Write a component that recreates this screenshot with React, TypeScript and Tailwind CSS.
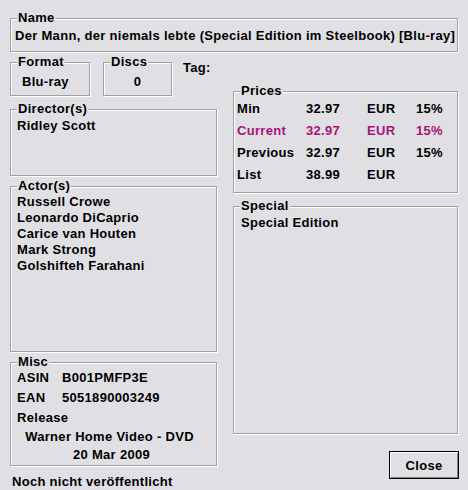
import React from "react";

const etched =
  "border border-[#a0a0a0] shadow-[inset_1px_1px_0_#ffffff,1px_1px_0_#ffffff]";

function Group({
  label,
  className,
  children,
}: {
  label: string;
  className: string;
  children?: React.ReactNode;
}) {
  return (
    <div className={`relative ${etched} ${className}`}>
      <span className="absolute left-[6px] top-[-9px] px-[1px] leading-[15px] bg-[#e0e0e4]">
        {label}
      </span>
      {children}
    </div>
  );
}

const prices = [
  { l: "Min", v: "32.97", c: "EUR", p: "15%", hl: false },
  { l: "Current", v: "32.97", c: "EUR", p: "15%", hl: true },
  { l: "Previous", v: "32.97", c: "EUR", p: "15%", hl: false },
  { l: "List", v: "38.99", c: "EUR", p: "", hl: false },
];

export default function App() {
  return (
    <div
      className="w-[468px] h-[490px] bg-[#e0e0e4] text-black font-bold text-[13px] tracking-[0.3px] pt-[18px] pl-[10px] overflow-hidden"
      style={{ fontFamily: '"Liberation Sans", Arial, sans-serif' }}
    >
      <Group label="Name" className="w-[448px] h-[34px] flex items-center pl-[4px] pt-[1px]">
        <span className="whitespace-nowrap overflow-hidden leading-[15px]">
          Der Mann, der niemals lebte (Special Edition im Steelbook) [Blu-ray]
        </span>
      </Group>

      <div className="flex gap-[16px] mt-[10px]">
        {/* left column */}
        <div className="w-[207px] flex flex-col">
          <div className="flex items-start">
            <Group label="Format" className="w-[80px] h-[34px] flex items-center pl-[11px] pt-[4px]">
              <span className="leading-[15px]">Blu-ray</span>
            </Group>
            <Group label="Discs" className="ml-[13px] w-[69px] h-[34px] flex items-center justify-center pt-[4px]">
              <span className="leading-[15px]">0</span>
            </Group>
            <span className="ml-[11px] mt-[-2px] leading-[15px]">Tag:</span>
          </div>

          <Group label="Director(s)" className="mt-[13px] h-[67px] pl-[6px] pt-[8px]">
            <div className="leading-[16px]">Ridley Scott</div>
          </Group>

          <Group label="Actor(s)" className="mt-[10px] h-[166px] pl-[6px] pt-[7px]">
            {["Russell Crowe", "Leonardo DiCaprio", "Carice van Houten", "Mark Strong", "Golshifteh Farahani"].map(
              (a) => (
                <div key={a} className="leading-[16px]">
                  {a}
                </div>
              )
            )}
          </Group>

          <Group label="Misc" className="mt-[10px] h-[104px] pl-[6px] pt-[4px]">
            <div className="flex h-[21px] items-center">
              <span className="w-[45px]">ASIN</span>
              <span>B001PMFP3E</span>
            </div>
            <div className="flex h-[20px] items-center">
              <span className="w-[45px]">EAN</span>
              <span>5051890003249</span>
            </div>
            <div className="flex h-[19px] items-center">Release</div>
            <div className="flex h-[19px] items-center justify-center pr-[14px]">Warner Home Video - DVD</div>
            <div className="flex h-[18px] items-center justify-center pr-[10px]">20 Mar 2009</div>
          </Group>

          <div className="mt-[8px] ml-[2px] leading-[15px]">Noch nicht veröffentlicht</div>
        </div>

        {/* right column */}
        <div className="w-[225px] flex flex-col mt-[29px]">
          <Group label="Prices" className="h-[102px] pl-[3px] pt-[6px]">
            {prices.map((r) => (
              <div
                key={r.l}
                className={`flex h-[22px] items-center ${r.hl ? "text-[#a8127c]" : ""}`}
              >
                <span className="w-[69px]">{r.l}</span>
                <span className="w-[61px]">{r.v}</span>
                <span className="w-[49px]">{r.c}</span>
                <span>{r.p}</span>
              </div>
            ))}
          </Group>

          <Group label="Special" className="mt-[13px] h-[228px] pl-[7px] pt-[8px]">
            <div className="leading-[16px]">Special Edition</div>
          </Group>

          <div className="flex justify-end mt-[17px] mr-[-1px]">
            <button className="w-[70px] h-[28px] border border-black bg-[#e0e0e4] shadow-[inset_1px_1px_0_#ffffff,inset_-1px_-1px_0_#808080] flex items-center justify-center font-bold text-[13px] tracking-[0.3px] leading-[15px]">
              Close
            </button>
          </div>
        </div>
      </div>
    </div>
  );
}
